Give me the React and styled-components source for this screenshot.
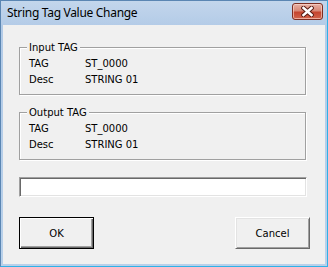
import React, { useState } from 'react'
import styled, { createGlobalStyle } from 'styled-components'

const GlobalStyle = createGlobalStyle`
  html, body { margin: 0; padding: 0; background: #ffffff; }
  * { box-sizing: border-box; }
`

const Window = styled.div`
  width: 328px;
  height: 267px;
  display: flex;
  flex-direction: column;
  background: linear-gradient(to bottom, #c3d6ec 0px, #b3cbe7 25px, #b9d1ea 100%);
  border: 1px solid #5b86b3;
  border-right-color: #2fb1e8;
  border-bottom-color: #2fb1e8;
  font-family: "DejaVu Sans", Tahoma, sans-serif;
`

const TitleBar = styled.div`
  height: 24px;
  display: flex;
  align-items: center;
  justify-content: space-between;
  padding: 0 4px 0 6px;
`

const Title = styled.span`
  font-family: "Noto Sans", "Segoe UI", sans-serif;
  font-size: 12px;
  letter-spacing: -0.3px;
  color: #000;
  line-height: 16px;
`

const CloseButton = styled.button`
  width: 31px;
  height: 17px;
  margin-top: -3px;
  padding: 0;
  border: 1px solid #7d2e22;
  border-radius: 3px;
  background: linear-gradient(to bottom, #e8b1a4 0%, #d88876 45%, #c5452f 55%, #d2654d 100%);
  box-shadow: inset 0 0 0 1px rgba(255, 220, 210, 0.6);
  display: flex;
  align-items: center;
  justify-content: center;
`

const Client = styled.div`
  flex: 1;
  margin: 0 2px 2px 2px;
  background: #f0f0f0;
  padding: 22px 15px 0 16px;
  display: flex;
  flex-direction: column;
`

const GroupBox = styled.div`
  position: relative;
  width: 287px;
  height: 48px;
  border: 1px solid #a0a0a0;
  box-shadow: inset 1px 1px 0 #ffffff, 1px 1px 0 #ffffff;
  padding: 8px 0 0 9px;
  margin-bottom: ${p => p.$gap}px;
`

const Legend = styled.span`
  position: absolute;
  top: -8px;
  left: 7px;
  padding: 0 2px;
  background: #f0f0f0;
  font-size: 10px;
  line-height: 16px;
  color: #000;
`

const Row = styled.div`
  display: flex;
  height: 16px;
  line-height: 16px;
  font-size: 10px;
  color: #000;
`

const Key = styled.span`
  width: 56px;
`

const TextBox = styled.input`
  width: 288px;
  height: 20px;
  margin: 0 0 20px 0;
  padding: 0 3px;
  border: 1px solid;
  border-color: #a0a0a0 #ffffff #ffffff #a0a0a0;
  box-shadow: inset 1px 1px 0 #696969, inset -1px -1px 0 #e3e3e3;
  background: #ffffff;
  font-family: "DejaVu Sans", Tahoma, sans-serif;
  font-size: 10px;
  outline: none;
`

const ButtonRow = styled.div`
  display: flex;
  justify-content: space-between;
`

const Button = styled.button`
  width: 75px;
  height: 32px;
  padding: 0;
  background: #f0f0f0;
  font-family: "DejaVu Sans", Tahoma, sans-serif;
  font-size: 10px;
  color: #000;
  border: 1px solid;
  border-color: ${p => (p.$default ? '#000000' : '#ffffff #696969 #696969 #ffffff')};
  box-shadow: ${p =>
    p.$default
      ? 'inset 1px 1px 0 #ffffff, inset -1px -1px 0 #696969, inset -2px -2px 0 #a0a0a0'
      : 'inset 1px 1px 0 #e3e3e3, inset -1px -1px 0 #a0a0a0'};
`

const tags = [
  { title: 'Input TAG', tag: 'ST_0000', desc: 'STRING 01', gap: 17 },
  { title: 'Output TAG', tag: 'ST_0000', desc: 'STRING 01', gap: 17 },
]

const App = () => {
  const [value, setValue] = useState('')

  return (
    <>
      <GlobalStyle />
      <Window>
        <TitleBar>
          <Title>String Tag Value Change</Title>
          <CloseButton aria-label="Close">
            <svg width="13" height="11" viewBox="0 0 13 11">
              <path d="M2.5 2 L10.5 9 M10.5 2 L2.5 9" stroke="#5a1d14" strokeWidth="4.5" strokeLinecap="square" />
              <path d="M2.5 2 L10.5 9 M10.5 2 L2.5 9" stroke="#ffffff" strokeWidth="2.5" strokeLinecap="square" />
            </svg>
          </CloseButton>
        </TitleBar>
        <Client>
          {tags.map(t => (
            <GroupBox key={t.title} $gap={t.gap}>
              <Legend>{t.title}</Legend>
              <Row><Key>TAG</Key><span>{t.tag}</span></Row>
              <Row><Key>Desc</Key><span>{t.desc}</span></Row>
            </GroupBox>
          ))}
          <TextBox value={value} onChange={e => setValue(e.target.value)} />
          <ButtonRow>
            <Button $default>OK</Button>
            <Button>Cancel</Button>
          </ButtonRow>
        </Client>
      </Window>
    </>
  )
}

export default App
